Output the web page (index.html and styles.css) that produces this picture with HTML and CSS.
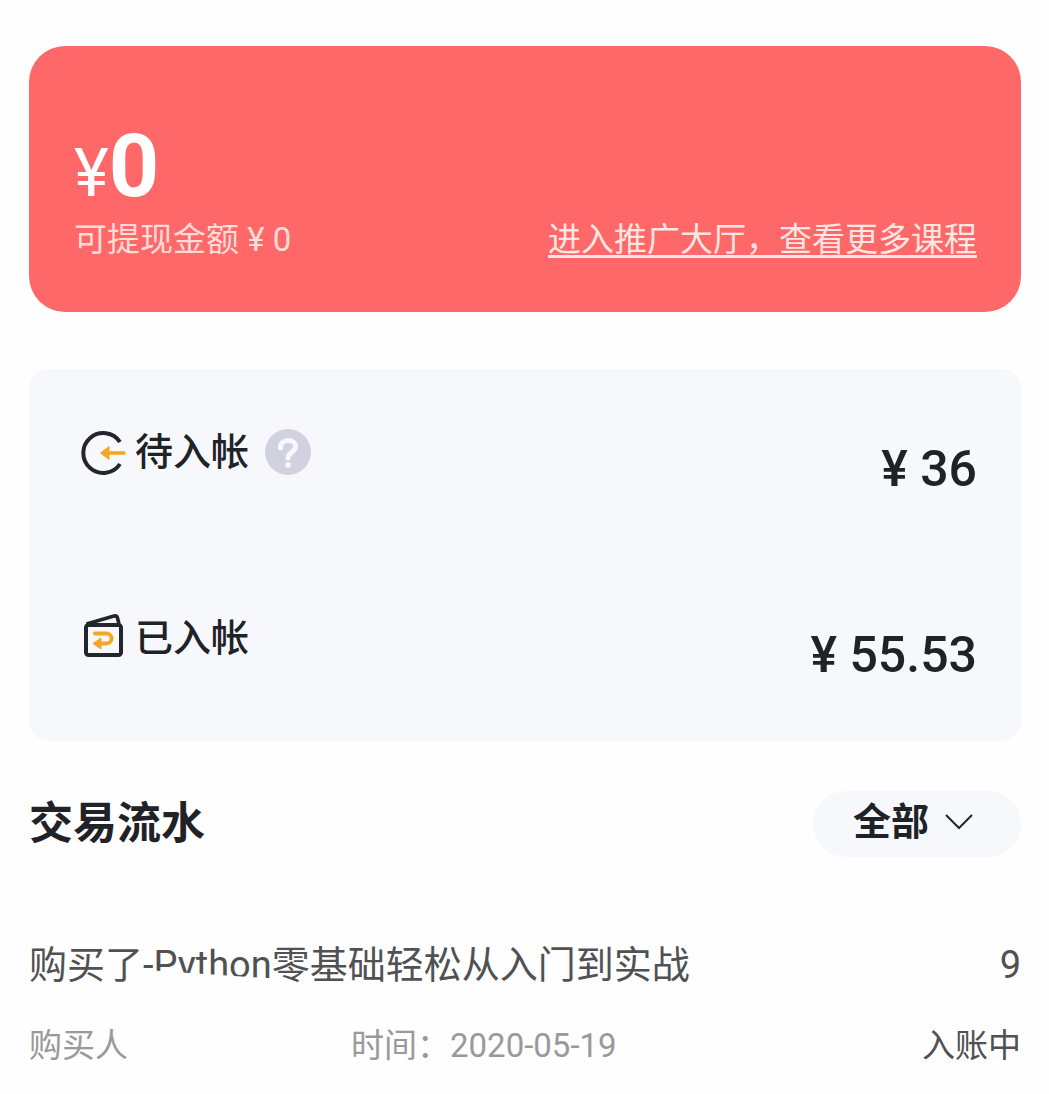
FILE: index.html
```html
<!DOCTYPE html>
<html lang="zh-CN">
<head>
    <meta charset="UTF-8">
    <meta name="viewport" content="width=device-width, initial-scale=1.0">
    <title>我的收益</title>
    <link rel="stylesheet" href="styles.css">
</head>
<body>
    <main class="page">
        <section class="balance">
            <div class="balance-total"><span class="currency">¥</span>0</div>
            <div class="balance-row">
                <span>可提现金额 ¥ 0</span>
                <a class="balance-link" href="#">进入推广大厅，查看更多课程</a>
            </div>
        </section>

        <section class="summary">
            <div class="summary-row">
                <div class="summary-label">
                    <svg class="icon" viewBox="0 0 46 46" fill="none" aria-hidden="true">
                        <path d="M39 13A20 20 0 1 0 39 35" stroke="#24262e" stroke-width="4"/>
                        <path d="M25 24H43" stroke="#f5a623" stroke-width="3.4" stroke-linecap="round"/>
                        <path d="M19.5 24L28 17.5V30.5Z" fill="#f5a623" stroke="#f5a623" stroke-linejoin="round"/>
                    </svg>
                    <span>待入帐</span>
                    <button class="help" type="button" aria-label="说明">
                        <svg viewBox="0 0 46 46" fill="none" aria-hidden="true">
                            <path d="M15.5 19C15.5 14 18.5 11.5 23 11.5S30.500 14 30.500 18C30.500 23 23 23 23 29" stroke="#f7f8fc" stroke-width="5" stroke-linecap="round"/>
                            <circle cx="23" cy="36" r="2.800" fill="#f7f8fc"/>
                        </svg>
                    </button>
                </div>
                <div class="summary-value">¥ 36</div>
            </div>
            <div class="summary-row">
                <div class="summary-label">
                    <svg class="icon" viewBox="0 0 46 46" fill="none" aria-hidden="true">
                        <rect x="5" y="10" width="35" height="30" rx="2.500" stroke="#24262e" stroke-width="4"/>
                        <path d="M5.500 9L33 1Q36 0.500 36.500 3L38 9" stroke="#24262e" stroke-width="3.600" stroke-linejoin="round"/>
                        <path d="M14 18.500H25C32.500 18.500 32.500 28.500 25 28.500H18" stroke="#f5a623" stroke-width="3.800" stroke-linecap="round"/>
                        <path d="M12 28.500L20 23V34Z" fill="#f5a623" stroke="#f5a623" stroke-linejoin="round"/>
                    </svg>
                    <span>已入帐</span>
                </div>
                <div class="summary-value">¥ 55.53</div>
            </div>
        </section>

        <section class="records">
            <div class="records-head">
                <h2>交易流水</h2>
                <div class="filter">
                    <select class="filter-select" aria-label="筛选">
                        <option>全部</option>
                    </select>
                    <svg class="filter-arrow" viewBox="0 0 30 18" fill="none" aria-hidden="true">
                        <path d="M2 2L15 15L28 2" stroke="#24262e" stroke-width="2"/>
                    </svg>
                </div>
            </div>

            <article class="record">
                <div class="record-main">
                    <span>购买了-<span class="clipped">Python</span>零基础轻松从入门到实战</span>
                    <span>9</span>
                </div>
                <div class="record-meta">
                    <span>购买人</span>
                    <span>时间：2020-05-19</span>
                    <span class="record-status">入账中</span>
                </div>
            </article>
        </section>
    </main>
</body>
</html>
```

FILE: styles.css
```css
* {
    box-sizing: border-box;
}

body {
    margin: 0;
    background-color: #fefefe;
    color: #202227;
    font-family: Roboto, "Noto Sans CJK SC", sans-serif;
}

.page {
    padding: 46px 28px 20px 29px;
}

.balance {
    padding: 76px 44px 52px 45px;
    border-radius: 36px;
    background-color: #ff6868;
    color: #fff;
}

.balance-total {
    font-size: 88px;
    font-weight: bold;
    line-height: 88px;
}

.currency {
    font-size: 66px;
    font-weight: normal;
    line-height: 66px;
}

.balance-row {
    display: flex;
    justify-content: space-between;
    margin-top: 10px;
    color: #ffdcd8;
    font-size: 33px;
    line-height: 40px;
}

.balance-link {
    color: #ffe6e3;
    text-underline-offset: 4px;
    text-decoration-thickness: 3px;
    text-decoration-skip-ink: none;
}

.summary {
    margin-top: 57px;
    border-radius: 20px;
    background-color: #f7f8fc;
}

.summary-row {
    display: flex;
    align-items: center;
    justify-content: space-between;
    height: 186px;
    padding: 0 44px 0 52px;
}

.summary-label {
    display: flex;
    align-items: center;
    padding-bottom: 20px;
    font-size: 38px;
    font-weight: 500;
    line-height: 56px;
}

.icon {
    width: 46px;
    height: 46px;
    margin-right: 8px;
    overflow: visible;
}

.help {
    width: 46px;
    height: 46px;
    margin-left: 16px;
    padding: 0;
    border: 0;
    border-radius: 50%;
    background-color: #d2d1e0;
}

.help svg {
    display: block;
}

.summary-value {
    padding-top: 14px;
    font-size: 50px;
    font-weight: 500;
    line-height: 60px;
}

.records-head {
    display: flex;
    align-items: center;
    justify-content: space-between;
    margin-top: 50px;
}

.records-head h2 {
    margin: 0;
    font-size: 44px;
    line-height: 66px;
}

.filter {
    position: relative;
}

.filter-select {
    appearance: none;
    display: block;
    width: 208px;
    height: 66px;
    padding: 0 40px 4px;
    border: 0;
    border-radius: 33px;
    background-color: #f7f8fc;
    color: #202227;
    font-family: inherit;
    font-size: 38px;
    font-weight: bold;
}

.filter-arrow {
    position: absolute;
    top: 22px;
    right: 47px;
    width: 30px;
    height: 18px;
    pointer-events: none;
}

.record {
    margin-top: 80px;
}

.record-main {
    display: flex;
    justify-content: space-between;
    color: #505153;
    font-size: 38px;
    line-height: 56px;
}

/* cuts the word off along a slope above the baseline */
.clipped {
    display: inline-block;
    clip-path: polygon(0 0, 100% 0, 100% 74%, 0 60%);
}

.record-meta {
    display: grid;
    grid-template-columns: 322px 1fr auto;
    margin-top: 28px;
    color: #999;
    font-size: 33px;
    line-height: 50px;
}

.record-status {
    color: #505153;
}
```
